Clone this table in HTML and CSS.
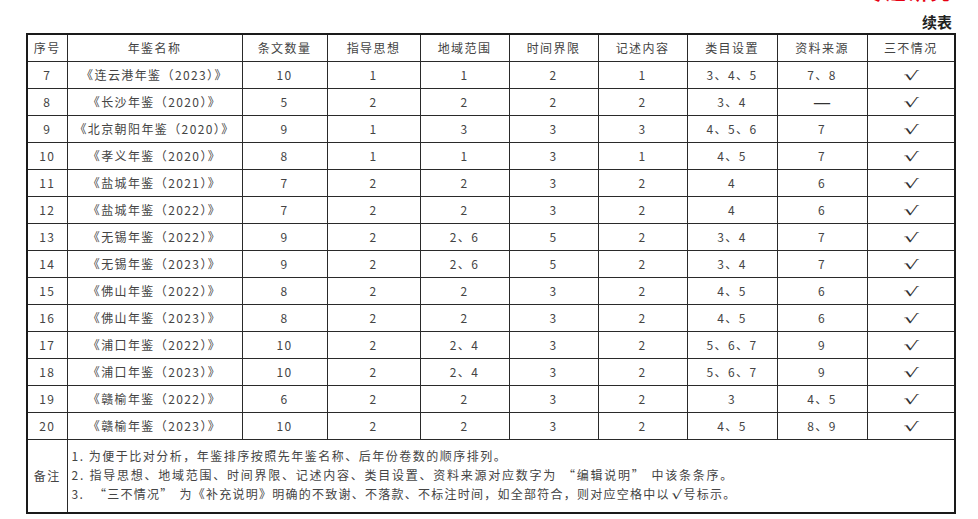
FILE: index.html
```html
<!DOCTYPE html>
<html lang="zh-CN">
<head>
<meta charset="utf-8">
<title>续表</title>
<link rel="stylesheet" href="styles.css">
</head>
<body>
<div class="page">
  <div class="running-head">专题研究</div>
  <div class="caption">续表</div>
  <table class="grid">
    <colgroup>
      <col class="c1"><col class="c2"><col class="c3"><col class="c4"><col class="c5">
      <col class="c6"><col class="c7"><col class="c8"><col class="c9"><col class="c10">
    </colgroup>
    <thead>
      <tr><th>序号</th><th>年鉴名称</th><th>条文数量</th><th>指导思想</th><th>地域范围</th><th>时间界限</th><th>记述内容</th><th>类目设置</th><th>资料来源</th><th>三不情况</th></tr>
    </thead>
    <tbody>
      <tr><td>7</td><td>《连云港年鉴（2023）》</td><td>10</td><td>1</td><td>1</td><td>2</td><td>1</td><td>3、4、5</td><td>7、8</td><td><span class="ok">√</span></td></tr>
      <tr><td>8</td><td>《长沙年鉴（2020）》</td><td>5</td><td>2</td><td>2</td><td>2</td><td>2</td><td>3、4</td><td><span class="dash">—</span></td><td><span class="ok">√</span></td></tr>
      <tr><td>9</td><td>《北京朝阳年鉴（2020）》</td><td>9</td><td>1</td><td>3</td><td>3</td><td>3</td><td>4、5、6</td><td>7</td><td><span class="ok">√</span></td></tr>
      <tr><td>10</td><td>《孝义年鉴（2020）》</td><td>8</td><td>1</td><td>1</td><td>3</td><td>1</td><td>4、5</td><td>7</td><td><span class="ok">√</span></td></tr>
      <tr><td>11</td><td>《盐城年鉴（2021）》</td><td>7</td><td>2</td><td>2</td><td>3</td><td>2</td><td>4</td><td>6</td><td><span class="ok">√</span></td></tr>
      <tr><td>12</td><td>《盐城年鉴（2022）》</td><td>7</td><td>2</td><td>2</td><td>3</td><td>2</td><td>4</td><td>6</td><td><span class="ok">√</span></td></tr>
      <tr><td>13</td><td>《无锡年鉴（2022）》</td><td>9</td><td>2</td><td>2、6</td><td>5</td><td>2</td><td>3、4</td><td>7</td><td><span class="ok">√</span></td></tr>
      <tr><td>14</td><td>《无锡年鉴（2023）》</td><td>9</td><td>2</td><td>2、6</td><td>5</td><td>2</td><td>3、4</td><td>7</td><td><span class="ok">√</span></td></tr>
      <tr><td>15</td><td>《佛山年鉴（2022）》</td><td>8</td><td>2</td><td>2</td><td>3</td><td>2</td><td>4、5</td><td>6</td><td><span class="ok">√</span></td></tr>
      <tr><td>16</td><td>《佛山年鉴（2023）》</td><td>8</td><td>2</td><td>2</td><td>3</td><td>2</td><td>4、5</td><td>6</td><td><span class="ok">√</span></td></tr>
      <tr><td>17</td><td>《浦口年鉴（2022）》</td><td>10</td><td>2</td><td>2、4</td><td>3</td><td>2</td><td>5、6、7</td><td>9</td><td><span class="ok">√</span></td></tr>
      <tr><td>18</td><td>《浦口年鉴（2023）》</td><td>10</td><td>2</td><td>2、4</td><td>3</td><td>2</td><td>5、6、7</td><td>9</td><td><span class="ok">√</span></td></tr>
      <tr><td>19</td><td>《赣榆年鉴（2022）》</td><td>6</td><td>2</td><td>2</td><td>3</td><td>2</td><td>3</td><td>4、5</td><td><span class="ok">√</span></td></tr>
      <tr><td>20</td><td>《赣榆年鉴（2023）》</td><td>10</td><td>2</td><td>2</td><td>3</td><td>2</td><td>4、5</td><td>8、9</td><td><span class="ok">√</span></td></tr>
      <tr class="notes">
        <td>备注</td>
        <td colspan="9" class="note-text">
          <p class="l1">1. 为便于比对分析，年鉴排序按照先年鉴名称、后年份卷数的顺序排列。</p>
          <p class="l2">2. 指导思想、地域范围、时间界限、记述内容、类目设置、资料来源对应数字为<span class="qo">“</span>编辑说明<span class="qc">”</span>中该条条序。</p>
          <p class="l3">3. <span class="qo">“</span>三不情况<span class="qc">”</span>为《补充说明》明确的不致谢、不落款、不标注时间，如全部符合，则对应空格中以<span class="tick">√</span>号标示。</p>
        </td>
      </tr>
    </tbody>
  </table>
</div>
</body>
</html>
```
FILE: styles.css
```css
html, body {
  margin: 0;
  padding: 0;
  background: #fff;
}
.page {
  position: relative;
  width: 978px;
  height: 519px;
  overflow: hidden;
  padding: 12px 0 0 26px;
  box-sizing: border-box;
  font-family: "Noto Sans CJK SC", "Noto Sans", sans-serif;
  color: #444;
}
.running-head {
  position: absolute;
  top: -18px;
  right: 26px;
  font-size: 20px;
  font-weight: bold;
  color: #e60012;
  letter-spacing: 2px;
  line-height: 20px;
}
.caption {
  width: 928px;
  text-align: right;
  font-size: 15px;
  font-weight: bold;
  color: #222;
  line-height: 20px;
  height: 21px;
  padding-right: 2px;
  box-sizing: border-box;
}
.grid {
  border-collapse: collapse;
  table-layout: fixed;
  width: 928px;
  border: 2px solid #1a1a1a;
  font-size: 12px;
  letter-spacing: 1.4px;
}
.c1 { width: 40px; }
.c2 { width: 175px; }
.c3 { width: 85px; }
.c4 { width: 93px; }
.c5 { width: 89px; }
.c6 { width: 89px; }
.c7 { width: 89px; }
.c8 { width: 90px; }
.c9 { width: 90px; }
.c10 { width: 88px; }
.grid th, .grid td {
  border: 1px solid #2a2a2a;
  height: 26px;
  padding: 0;
  text-align: center;
  vertical-align: middle;
  font-weight: normal;
  line-height: 14px;
  white-space: nowrap;
}
.ok {
  display: inline-block;
  font-family: "DejaVu Sans", sans-serif;
  font-size: 13px;
  letter-spacing: 0;
  color: #333;
  transform: scale(1.9, 0.95);
}
.dash {
  font-family: "DejaVu Sans", sans-serif;
  font-size: 18px;
  letter-spacing: 0;
  color: #333;
}
.notes td {
  height: 66px;
}
.grid td.note-text {
  text-align: left;
  padding: 2px 0 4px 4px;
  font-size: 12px;
}
.note-text p {
  margin: 0;
  line-height: 19px;
}
.l1 { letter-spacing: 1.5px; }
.l2 { letter-spacing: 1.75px; }
.l3 { letter-spacing: 1.25px; }
.qo {
  margin-left: 6px;
}
.qc {
  margin-right: 6px;
}
.tick {
  display: inline-block;
  font-family: "DejaVu Sans", sans-serif;
  font-size: 12px;
  letter-spacing: 0;
  margin: 0 3px;
  transform: scaleX(1.4);
  color: #333;
}
```
